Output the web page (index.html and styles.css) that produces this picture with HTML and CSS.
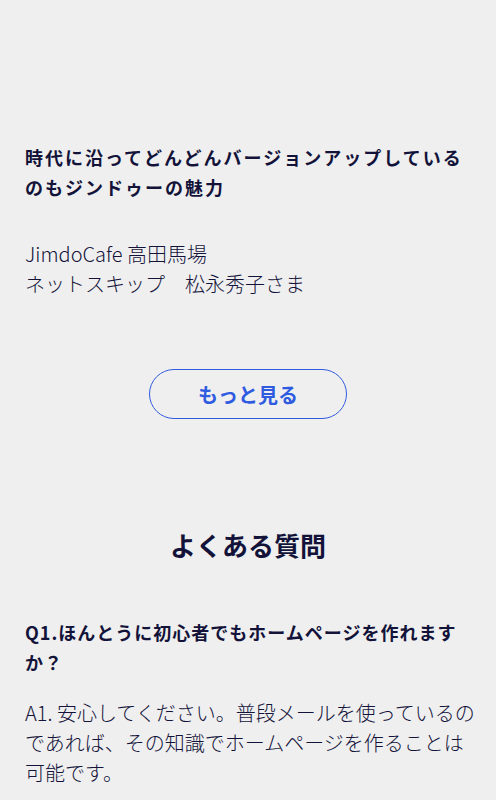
FILE: index.html
```html
<!DOCTYPE html>
<html lang="ja">
<head>
    <meta charset="UTF-8">
    <meta name="viewport" content="width=device-width, initial-scale=1.0">
    <title>Jimdo</title>
    <link rel="stylesheet" href="styles.css">
</head>
<body>
    <section class="voice">
        <h3 class="voice-title">時代に沿ってどんどんバージョンアップしているのもジンドゥーの魅力</h3>
        <p class="voice-name">JimdoCafe 高田馬場<br>ネットスキップ　松永秀子さま</p>
        <div class="more">
            <a class="more-btn" href="#">もっと見る</a>
        </div>
    </section>
    <section class="faq">
        <h2 class="faq-title">よくある質問</h2>
        <div class="faq-item">
            <h3 class="faq-q">Q1.ほんとうに初心者でもホームページを作れますか？</h3>
            <p class="faq-a">A1. 安心してください。普段メールを使っているのであれば、その知識でホームページを作ることは可能です。</p>
        </div>
    </section>
</body>
</html>
```

FILE: styles.css
```css
body {
    margin: 0;
    padding: 0;
    background-color: #efefef;
    color: #13133a;
    font-family: "Noto Sans CJK JP", "Noto Sans", sans-serif;
}
.voice {
    padding: 142px 25px 0;
}
.voice-title {
    margin: 0;
    font-size: 18px;
    font-weight: bold;
    line-height: 30px;
    letter-spacing: 2px;
}
.voice-name {
    margin: 37px 0 0;
    font-size: 20px;
    font-weight: 300;
    line-height: 30px;
}
.more {
    display: flex;
    justify-content: center;
    margin-top: 70px;
}
.more-btn {
    display: flex;
    align-items: center;
    justify-content: center;
    width: 198px;
    height: 50px;
    box-sizing: border-box;
    border: 1px solid #2f5be0;
    border-radius: 25px;
    color: #2f5be0;
    font-size: 20px;
    font-weight: bold;
    text-decoration: none;
}
.faq {
    padding: 106px 16px 0 25px;
}
.faq-title {
    margin: 0 0 0 -9px;
    text-align: center;
    font-size: 26px;
    font-weight: bold;
    line-height: 40px;
}
.faq-q {
    margin: 52px 0 0;
    font-size: 18px;
    font-weight: bold;
    line-height: 30px;
    letter-spacing: 1px;
}
.faq-a {
    margin: 21px -2px 0 0;
    font-size: 20px;
    font-weight: 300;
    line-height: 30px;
}
```
